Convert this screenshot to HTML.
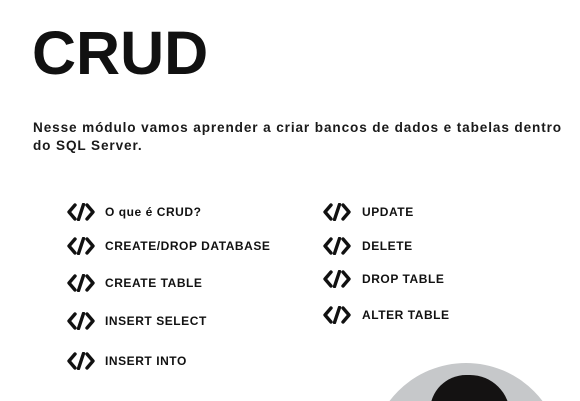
<!DOCTYPE html>
<html style="overflow:hidden;height:401px"><head><meta charset="utf-8"><style>
html,body{margin:0;width:580px;height:401px;overflow:hidden}
body{background:#fff;position:relative;font-family:"Liberation Sans",sans-serif;color:#111}
.t{position:absolute;left:32px;top:18px;font-size:61px;font-weight:bold;letter-spacing:0px;margin:0;line-height:70px}
.p{position:absolute;left:33px;top:119px;font-size:13.6px;line-height:18px;font-weight:bold;color:#1a1a1a;width:545px;letter-spacing:0.88px;white-space:nowrap}
.i{position:absolute;font-size:12px;font-weight:bold;height:20px;line-height:20px;letter-spacing:0.55px}
.i svg{position:absolute;top:1px}
.i span{position:absolute;white-space:nowrap}
.L svg{left:0}.L span{left:38px}
.R svg{left:0}.R span{left:39px}
</style></head><body>
<div class="t">CRUD</div>
<div class="p">Nesse módulo vamos aprender a criar bancos de dados e tabelas dentro<br>do SQL Server.</div>

<svg width="0" height="0" style="position:absolute;left:0;top:0"><defs><g id="ic" fill="none" stroke="#111" stroke-width="3.4" stroke-linecap="round" stroke-linejoin="round"><path d="M8 2 L2 9 L8 16"/><path d="M16.5 1.5 L11.5 16.5"/><path d="M20 2 L26 9 L20 16"/></g></defs></svg>

<div class="i L" style="left:67px;top:202px"><svg width="28" height="18"><use href="#ic"/></svg><span>O que é CRUD?</span></div>
<div class="i L" style="left:67px;top:236px"><svg width="28" height="18"><use href="#ic"/></svg><span>CREATE/DROP DATABASE</span></div>
<div class="i L" style="left:67px;top:273px"><svg width="28" height="18"><use href="#ic"/></svg><span>CREATE TABLE</span></div>
<div class="i L" style="left:67px;top:311px"><svg width="28" height="18"><use href="#ic"/></svg><span>INSERT SELECT</span></div>
<div class="i L" style="left:67px;top:351px"><svg width="28" height="18"><use href="#ic"/></svg><span>INSERT INTO</span></div>

<div class="i R" style="left:323px;top:202px"><svg width="28" height="18"><use href="#ic"/></svg><span>UPDATE</span></div>
<div class="i R" style="left:323px;top:236px"><svg width="28" height="18"><use href="#ic"/></svg><span>DELETE</span></div>
<div class="i R" style="left:323px;top:269px"><svg width="28" height="18"><use href="#ic"/></svg><span>DROP TABLE</span></div>
<div class="i R" style="left:323px;top:305px"><svg width="28" height="18"><use href="#ic"/></svg><span>ALTER TABLE</span></div>

<div style="position:absolute;left:370px;top:363px;width:192px;height:38px;overflow:hidden">
<div style="position:absolute;left:0;top:0;width:192px;height:192px;border-radius:50%;background:#c6c8ca;overflow:hidden">
<div style="position:absolute;left:60px;top:12px;width:80px;height:80px;border-radius:45% 50% 40% 40%;background:#141212"></div>
</div></div>
</body></html>
